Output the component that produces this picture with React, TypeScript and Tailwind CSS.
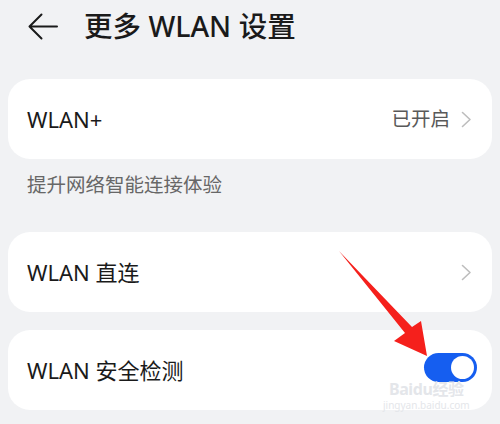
import React from 'react';

function Chevron() {
  return (
    <svg width="11" height="17" viewBox="0 0 11 17" fill="none" className="shrink-0">
      <path d="M1.5 1.5 L9 8.5 L1.5 15.5" stroke="#bdbdbd" strokeWidth="1.6" strokeLinecap="round" strokeLinejoin="round" />
    </svg>
  );
}

export default function App() {
  return (
    <main
      className="relative w-[500px] h-[424px] overflow-hidden bg-[#f1f2f4] px-2"
      style={{ fontFamily: '"Noto Sans", "Noto Sans CJK SC", sans-serif' }}
    >
      {/* Header */}
      <div className="flex items-center h-[52px] pl-5">
        <svg width="30" height="27" viewBox="0 0 30 27" fill="none" className="shrink-0">
          <path d="M13.5 1.5 L1.5 13.5 L13.5 25.5 M1.5 13.5 H29" stroke="#1a1a1a" strokeWidth="2" strokeLinecap="round" strokeLinejoin="round" />
        </svg>
        <h1 className="ml-[26px] text-[28.5px] font-medium text-[#1a1a1a] leading-none">更多 WLAN 设置</h1>
      </div>

      {/* WLAN+ */}
      <div className="mt-[27px] h-[80px] bg-white rounded-[22px] flex items-center justify-between pl-[19px] pr-[20px]">
        <span className="text-[22px] text-[#1a1a1a]">WLAN+</span>
        <div className="flex items-center gap-[11px]">
          <span className="text-[19.5px] text-[#595959]">已开启</span>
          <Chevron />
        </div>
      </div>
      <p className="mt-[13px] pl-[19px] text-[19.5px] leading-[26px] text-[#676767]">提升网络智能连接体验</p>

      {/* WLAN 直连 */}
      <div className="mt-[34px] h-[80px] bg-white rounded-[22px] flex items-center justify-between pl-[19px] pr-[20px]">
        <span className="text-[22px] text-[#1a1a1a]">WLAN 直连</span>
        <Chevron />
      </div>

      {/* WLAN 安全检测 */}
      <div className="mt-[18px] h-[80px] bg-white rounded-[22px] flex items-center justify-between pl-[19px] pr-[15px]">
        <span className="text-[22px] text-[#1a1a1a]">WLAN 安全检测</span>
        <div className="w-[53px] h-[29px] rounded-full bg-[#155ef0] flex items-center justify-end pr-[3px] -mt-[6px]">
          <div className="w-[23px] h-[23px] rounded-full bg-white" />
        </div>
      </div>

      {/* Red annotation arrow */}
      <svg className="absolute left-0 top-0 pointer-events-none" width="500" height="424" viewBox="0 0 500 424">
        <polygon points="339,251 412,327 421,321 427,356 394,341 405,333" fill="#f5201c" />
      </svg>

      {/* Watermark */}
      <div className="absolute left-[383px] top-[381px] flex flex-col items-center gap-[3px] text-[#e4e6ea] pointer-events-none">
        <span className="text-[16px] font-bold leading-[16px] tracking-tight">Baidu经验</span>
        <span className="text-[10px] leading-[10px]">jingyan.baidu.com</span>
      </div>
    </main>
  );
}
